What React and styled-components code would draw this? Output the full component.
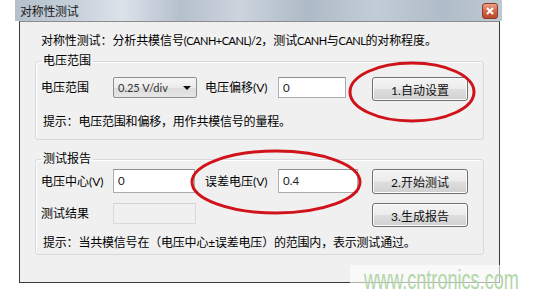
import React from "react";
import styled, { createGlobalStyle } from "styled-components";

const GlobalStyle = createGlobalStyle`
  html, body {
    margin: 0;
    padding: 0;
    background: #ffffff;
  }
  body {
    font-family: "Lato", "Noto Sans CJK SC", sans-serif;
    font-size: 12px;
    color: #000;
  }
`;

const Page = styled.div`
  position: relative;
  width: 549px;
  height: 297px;
  overflow: hidden;
  background: #fff;
  padding-left: 15px;
  box-sizing: border-box;
`;

const Window = styled.div`
  width: 487px;
  display: flex;
  flex-direction: column;
`;

const TitleBar = styled.div`
  height: 21px;
  display: flex;
  align-items: center;
  justify-content: space-between;
  padding: 0 3px 0 5px;
  background: linear-gradient(
    90deg,
    #b3bfcb 0%,
    #c6d0da 12%,
    #dbe2ea 22%,
    #b5c0cc 34%,
    #ccd4de 46%,
    #aebac7 60%,
    #c2ccd6 74%,
    #b0bcc9 88%,
    #bfc9d4 100%
  );
  box-sizing: border-box;
`;

const Title = styled.span`
  font-size: 12px;
  color: #1b1b1b;
  letter-spacing: -0.3px;
`;

const CloseButton = styled.div`
  width: 16px;
  height: 16px;
  border-radius: 3px;
  border: 1px solid #8b3a28;
  background: linear-gradient(180deg, #e9a187 0%, #d2684a 50%, #b9472a 100%);
  display: flex;
  align-items: center;
  justify-content: center;
  box-sizing: border-box;
  margin-right: 1px;
`;

const Body = styled.div`
  margin-left: 4px;
  width: 481px;
  height: 262px;
  border: 1px solid #3a3a3a;
  border-top: 1px solid #8c8c8c;
  background: #f0f0f0;
  box-sizing: border-box;
  padding: 11px 15px 0 15px;
`;

const Intro = styled.div`
  line-height: 16px;
  padding-left: 6px;
  letter-spacing: -0.1px;
  white-space: nowrap;
`;

const Latin = styled.span`
  font-size: 11px;
  letter-spacing: -0.5px;
`;

const Group = styled.fieldset`
  margin: ${(p) => p.$top}px 0 0 0;
  padding: ${(p) => p.$padTop}px 5px ${(p) => p.$padBottom}px 5px;
  border: 1px solid #d6dadf;
  border-radius: 3px;
  box-shadow: inset 1px 1px 0 #ffffff;
  width: 449px;
  box-sizing: border-box;
`;

const Legend = styled.legend`
  padding: 0 2px;
  line-height: 16px;
  font-size: 12px;
`;

const Row = styled.div`
  display: grid;
  grid-template-columns: 72px 84px 8px 73px 94px 96px;
  align-items: start;
  margin-top: ${(p) => p.$gap || 0}px;
`;

const Label = styled.span`
  line-height: ${(p) => p.$h || 21}px;
  white-space: nowrap;
  grid-column: ${(p) => p.$col};
`;

const Combo = styled.div`
  grid-column: 2;
  height: 21px;
  border: 1px solid #8e8f8f;
  border-radius: 2px;
  background: linear-gradient(180deg, #f6f6f6 0%, #ebebeb 50%, #dcdcdc 51%, #e6e6e6 100%);
  display: flex;
  align-items: center;
  justify-content: space-between;
  padding: 0 5px 0 4px;
  box-sizing: border-box;
  font-size: 11px;
  color: #333;
`;

const Arrow = styled.span`
  width: 0;
  height: 0;
  border-left: 4px solid transparent;
  border-right: 4px solid transparent;
  border-top: 4px solid #111;
`;

const TextBox = styled.div`
  grid-column: ${(p) => p.$col};
  width: ${(p) => p.$w}px;
  height: ${(p) => p.$h || 21}px;
  border: 1px solid ${(p) => (p.$disabled ? "#dadada" : "#abadb3")};
  border-top-color: ${(p) => (p.$disabled ? "#d2d2d2" : "#8d9096")};
  background: ${(p) => (p.$disabled ? "#f0f0f0" : "#ffffff")};
  box-sizing: border-box;
  padding: 0 4px;
  line-height: ${(p) => (p.$h || 21) - 2}px;
  font-size: 11.5px;
  color: #222;
`;

const Button = styled.button`
  grid-column: 6;
  width: 96px;
  height: ${(p) => p.$h || 24}px;
  border: 1px solid #707070;
  border-radius: 3px;
  background: linear-gradient(180deg, #f4f4f4 0%, #ececec 48%, #dedede 52%, #d0d0d0 100%);
  box-shadow: inset 0 0 0 1px #fbfbfb;
  font-family: "Lato", "Noto Sans CJK SC", sans-serif;
  font-size: 12px;
  color: #111;
  padding: 0;
  cursor: default;
`;

const Hint = styled.div`
  line-height: 16px;
  margin-top: ${(p) => p.$gap}px;
  padding-left: 2px;
  letter-spacing: -0.2px;
`;

const Overlay = styled.svg`
  position: absolute;
  left: 0;
  top: 0;
  pointer-events: none;
`;

const Watermark = styled.div`
  position: absolute;
  left: 350px;
  top: 265px;
  width: 199px;
  height: 30px;
  background: rgba(255, 255, 255, 0.6);
  font-family: "Liberation Sans", Arial, sans-serif;
  font-size: 27px;
  line-height: 30px;
  color: #b2d6a8;
  white-space: nowrap;
  padding-left: 14px;
  box-sizing: border-box;
  span {
    display: inline-block;
    transform: scaleX(0.67);
    transform-origin: left center;
  }
`;

export default function App() {
  return (
    <>
      <GlobalStyle />
      <Page>
        <Window>
          <TitleBar>
            <Title>对称性测试</Title>
            <CloseButton>
              <svg width="8" height="8" viewBox="0 0 8 8">
                <path d="M1 1 L7 7 M7 1 L1 7" stroke="#fff" strokeWidth="2" />
              </svg>
            </CloseButton>
          </TitleBar>
          <Body>
            <Intro>
              对称性测试：分析共模信号<Latin>(CANH+CANL)/2</Latin>，测试<Latin>CANH</Latin>与<Latin>CANL</Latin>的对称程度。
            </Intro>

            <Group $top={4} $padTop={8} $padBottom={9}>
              <Legend>电压范围</Legend>
              <Row>
                <Label $col={1}>电压范围</Label>
                <Combo>
                  <span>0.25 V/div</span>
                  <Arrow />
                </Combo>
                <Label $col={4}>电压偏移(V)</Label>
                <TextBox $col={5} $w={68}>0</TextBox>
                <Button>1.自动设置</Button>
              </Row>
              <Hint $gap={13}>提示：电压范围和偏移，用作共模信号的量程。</Hint>
            </Group>

            <Group $top={11} $padTop={2} $padBottom={3}>
              <Legend>测试报告</Legend>
              <Row>
                <Label $col={1} $h={25}>电压中心(V)</Label>
                <TextBox $col={2} $w={82} $h={24}>0</TextBox>
                <Label $col={4} $h={25}>误差电压(V)</Label>
                <TextBox $col={5} $w={80} $h={24}>0.4</TextBox>
                <Button $h={25}>2.开始测试</Button>
              </Row>
              <Row $gap={9}>
                <Label $col={1} $h={22}>测试结果</Label>
                <TextBox $col={2} $w={83} $disabled />
                <Button>3.生成报告</Button>
              </Row>
              <Hint $gap={8}>提示：当共模信号在（电压中心±误差电压）的范围内，表示测试通过。</Hint>
            </Group>
          </Body>
        </Window>

        <Overlay width="549" height="297">
          <ellipse cx="412" cy="92" rx="62" ry="29" fill="none" stroke="#d0131b" strokeWidth="3" />
          <ellipse cx="276" cy="182" rx="84" ry="31" fill="none" stroke="#d0131b" strokeWidth="3" />
        </Overlay>

        <Watermark>
          <span>www.cntronics.com</span>
        </Watermark>
      </Page>
    </>
  );
}
